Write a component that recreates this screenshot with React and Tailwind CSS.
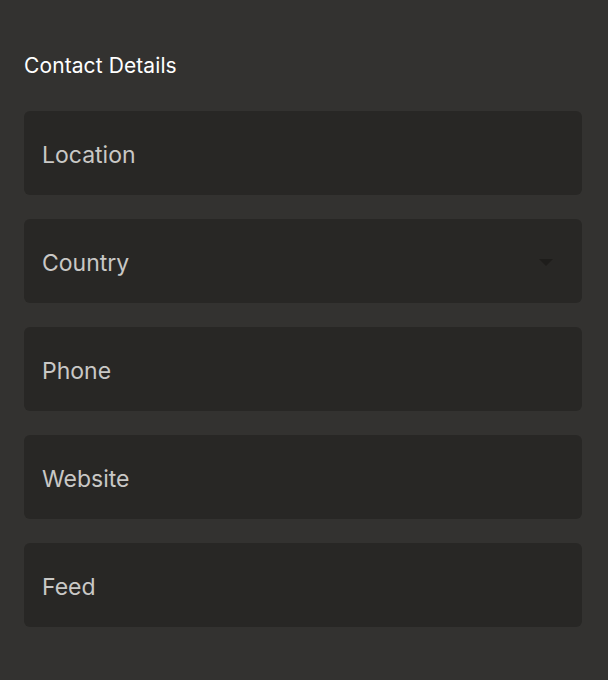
import React from 'react';

const fields = ['Location', 'Country', 'Phone', 'Website', 'Feed'];

export default function App() {
  return (
    <div className="min-h-screen w-full bg-[#333230] pl-6 pr-[26px] pt-[52px] font-['Inter',sans-serif]">
      <h2 className="text-[21px] leading-[28px] font-normal text-white tracking-[0.1px]">Contact Details</h2>

      <div className="mt-[31px] flex flex-col gap-6">
        {fields.map((label) => (
          <div
            key={label}
            className="relative flex h-[84px] items-center rounded-md bg-[#282725] px-[18px]"
          >
            <span className="pt-[4px] text-[23px] leading-[28px] text-[#c9c8c6]">{label}</span>
            {label === 'Country' && (
              <svg
                className="absolute right-[29px] top-[40px]"
                width="14"
                height="8"
                viewBox="0 0 14 8"
              >
                <path d="M0 0h14L7 7z" fill="#1e1d1b" />
              </svg>
            )}
          </div>
        ))}
      </div>
    </div>
  );
}
